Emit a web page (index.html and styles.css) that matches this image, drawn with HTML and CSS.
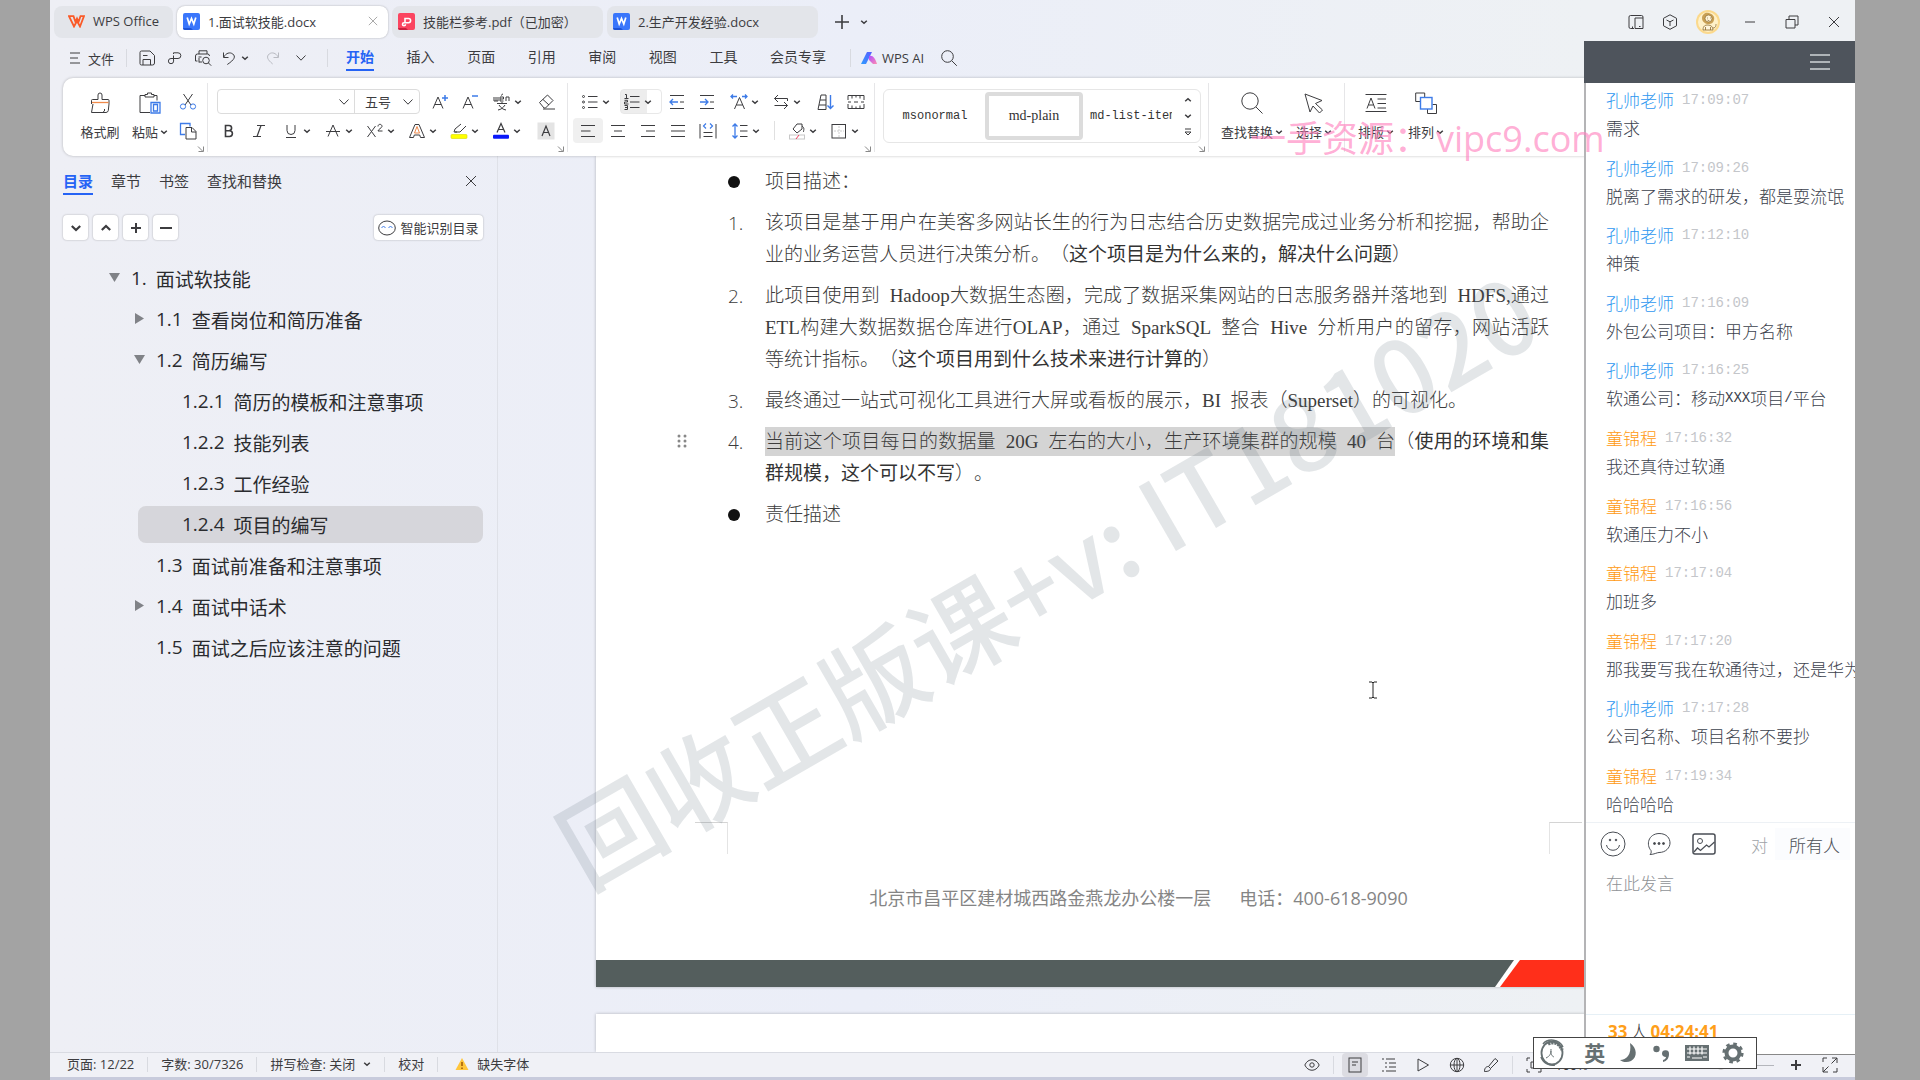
FILE: index.html
```html
<!DOCTYPE html>
<html lang="zh-CN">
<head>
  <meta charset="UTF-8">
  <meta name="viewport" content="width=device-width, initial-scale=1.0">
  <title>1.面试软技能.docx - WPS Office</title>
  <link rel="stylesheet" href="styles.css">
</head>
<body>
  <!-- Icon sprite -->
  <svg class="sprite" aria-hidden="true">
    <symbol id="chev" viewBox="0 0 8 8"><path d="M1.2 2.7 4 5.3 6.800 2.700" stroke-width="1.500"/></symbol>
    <symbol id="chev-up" viewBox="0 0 8 8"><path d="M1.200 5.300 4 2.700 6.800 5.300" stroke-width="1.500"/></symbol>
    <symbol id="chev-wide" viewBox="0 0 12 12"><path d="M1.500 3.500 6 8.200 10.500 3.500"/></symbol>
    <symbol id="launch" viewBox="0 0 8 8"><path d="M1 1.500 5.500 6M6.500 1.500V6.500H1.500"/></symbol>
    <symbol id="doc-w" viewBox="0 0 17 17"><rect width="17" height="17" rx="2" fill="#3a76fb" stroke="none"/><path d="M0 15h8l2 2H2a2 2 0 0 1-2-2z" fill="#1d52d6" stroke="none"/><path d="M4.200 4.500 6.200 11 8.500 5.500 10.800 11 12.800 4.500" stroke="#fff" stroke-width="1.700"/></symbol>
    <symbol id="doc-p" viewBox="0 0 17 17"><rect width="17" height="17" rx="2" fill="#fb4560" stroke="none"/><path d="M0 15h8l2 2H2a2 2 0 0 1-2-2z" fill="#c9213e" stroke="none"/><path d="M7 9.500V5.500h3.500a2 2 0 0 1 0 4.200H6a1.500 1.500 0 1 0 1.500 1.500" stroke="#fff" stroke-width="1.600"/></symbol>
    <symbol id="close" viewBox="0 0 12 12"><path d="M1 1 11 11M11 1 1 11"/></symbol>
    <symbol id="save" viewBox="0 0 18 18"><path d="M2 3.500A1.500 1.500 0 0 1 3.500 2H12l4.500 4.500V14a2 2 0 0 1-2 2h-11A1.500 1.500 0 0 1 2 14.500zM5 16v-5.500h7.500V16M5 6.500h4.500"/></symbol>
    <symbol id="share" viewBox="0 0 18 18"><path d="M7.500 11V6.500M7.500 3.800H12a2.800 2.800 0 0 1 0 5.700H7.500M7.500 3.800V5M9 9.500H5a2.600 2.600 0 1 0 2.600 2.600V11"/></symbol>
    <symbol id="preview" viewBox="0 0 18 18"><path d="M5 5V1.800h8V5M8 13H5M5 9v4.500M3.500 12H1.500V7a2 2 0 0 1 2-2h10a2 2 0 0 1 2 2M4.500 8h3"/><circle cx="12" cy="11.500" r="3.300"/><path d="m14.500 14 2.700 2.700"/></symbol>
    <symbol id="undo" viewBox="0 0 18 18"><path d="M3.500 3.500v5h5M3.800 8C6 4 10 2.800 12.800 5c3 2.500 2 5.500-5.500 10.500"/></symbol>
    <symbol id="redo" viewBox="0 0 18 18"><path d="M14.500 3.500v5h-5M14.200 8C12 4 8 2.800 5.200 5c-3 2.500-2 5.500 3.500 10"/></symbol>
    <symbol id="search" viewBox="0 0 18 18"><circle cx="7.500" cy="7.500" r="5.800"/><path d="m11.800 11.800 5 5"/></symbol>
    <symbol id="brush" viewBox="0 0 22 22"><path d="M2.500 12V8.500a1 1 0 0 1 1-1H9V3a2 2 0 0 1 4 0v4.500h6a1 1 0 0 1 1 1V12"/><path d="M3 10.500h16.500" stroke="#f08a4b" stroke-width="1.300"/><path d="M4 12 2.500 20.500H17a2.500 2.500 0 0 0 2.300-2L20 12M15.500 17v2l-2 1.500"/></symbol>
    <symbol id="paste" viewBox="0 0 22 22"><path d="M6 3.500H1v17h10M15 3.500h3v5M6 5V2.500h2.500V1h4v1.500H15V5z"/><path d="M12 10.500h9v10.500h-9zM14.500 12.500h4v6.500h-4z" stroke="#3d7be8" stroke-width="1.300"/></symbol>
    <symbol id="cut" viewBox="0 0 18 18"><path d="m4.500 1 7.500 11M13.500 1 6 12"/><circle cx="4" cy="13.500" r="2.600" stroke="#3d7be8"/><circle cx="14" cy="13.500" r="2.600" stroke="#3d7be8"/></symbol>
    <symbol id="copy" viewBox="0 0 18 18"><path d="M6 12.500H1.500v-11H11v3" stroke="#3d7be8" stroke-width="1.300"/><path d="M7 5.500h6l4 4v7.500H7zM12.500 5.500V10H17"/></symbol>
    <symbol id="a-plus" viewBox="0 0 18 18"><path d="M2 15.500 7 4l5 11.500M3.800 11.500h6.400"/><path d="M14 2v6M11 5h6" stroke="#3d7be8" stroke-width="1.500"/></symbol>
    <symbol id="a-minus" viewBox="0 0 18 18"><path d="M2 15.500 7 4l5 11.500M3.800 11.500h6.400"/><path d="M11 3h6" stroke="#3d7be8" stroke-width="1.500"/></symbol>
    <symbol id="pinyin" viewBox="0 0 18 18"><path d="M1 4v4h4V4M3 4v4M7 6h3.500V4H7v4h3.500M13 8V4h3v4M8 2.500 10 .8M4 10.500h10M9 9v1.500M6 12c2 3 4 4.500 7 5M12 12c-2 3-4 4.500-7 5"/></symbol>
    <symbol id="eraser" viewBox="0 0 18 18"><path d="m1.500 9.500 8-7.500 5.500 5.500-7.500 7.500H6zM5 6.500l6 5.500M5 16h12"/></symbol>
    <symbol id="bold" viewBox="0 0 18 18"><path d="M5.500 3.500H9a2.500 2.500 0 0 1 0 5.200H5.500zM5.500 8.700h4a2.900 2.900 0 0 1 0 5.800h-4z" stroke-width="1.600"/></symbol>
    <symbol id="italic" viewBox="0 0 18 18"><path d="M7 3.500h8M3 14.500h8M11 3.500 7 14.500" stroke-width="1.200"/></symbol>
    <symbol id="underline" viewBox="0 0 18 18"><path d="M5 3v5.500a4 4 0 0 0 8 0V3M4 15.500h10"/></symbol>
    <symbol id="strike" viewBox="0 0 18 18"><path d="M2 9.500h14M4 14.500 9 3l5 11.500" /></symbol>
    <symbol id="super" viewBox="0 0 18 18"><path d="m1.500 4 8 11M9.500 4l-8 11M12 4.500c0-3 4-2.800 4 0 0 1.200-4 3-4 4.500h4.500"/></symbol>
    <symbol id="a-effect" viewBox="0 0 18 18"><path d="M1.500 15.500 7 2.500h4l5.500 13h-4L11.700 13H6.300l-.8 2.500z"/><path d="m6.500 11 2.500-6.500L11.500 11z" stroke="#f08a4b"/></symbol>
    <symbol id="marker" viewBox="0 0 18 18"><path d="m4 10 1-3 6-5M5 10h5l6-6M4 10h3"/><rect x="1" y="12.500" width="16" height="4" rx="1" fill="#ffff00" stroke="#d8d800" stroke-width=".6"/></symbol>
    <symbol id="a-color" viewBox="0 0 18 18"><path d="M5 10.500 9 1.500l4 9M6.500 7.500h5" stroke-width="1.200"/><rect x="1" y="12.800" width="16" height="4" rx="1" fill="#0a19fa" stroke="none"/></symbol>
    <symbol id="a-shade" viewBox="0 0 18 18"><rect x=".5" y=".5" width="17" height="17" fill="#e4e4e4" stroke="none"/><path d="M5 14 9 4l4 10M6.300 10.500h5.400" stroke-width="1.200"/></symbol>
    <symbol id="bullets" viewBox="0 0 18 18"><path d="M7 3.500h9.500M7 9h9.500M7 14.500h9.500"/><circle cx="2.500" cy="3.500" r="1"/><circle cx="2.500" cy="9" r="1"/><circle cx="2.500" cy="14.500" r="1"/></symbol>
    <symbol id="numbers" viewBox="0 0 18 18"><path d="M7 3.500h9.500M7 9h9.500M7 14.500h9.500"/><path d="M2 1.500h1.500V5M1.500 5.500h4M1.500 7.300h3v1.700h-3v2h4M1.500 12.500h3v4h-3M2 14.500h2.500"/></symbol>
    <symbol id="outdent" viewBox="0 0 18 18"><path d="M2 2.500h14M2 15.500h14M12 9h4"/><path d="M10 9H2M5 6 2 9l3 3" stroke="#3d7be8" stroke-width="1.300"/></symbol>
    <symbol id="indent" viewBox="0 0 18 18"><path d="M2 2.500h14M2 15.500h14M12 9h4"/><path d="M2 9h8M7 6l3 3-3 3" stroke="#3d7be8" stroke-width="1.300"/></symbol>
    <symbol id="a-space" viewBox="0 0 18 18"><path d="m4.500 16 5-11.500 5 11.500M6.300 12h6.400"/><path d="M1 3.500h6M3 1.500l-2 2 2 2M17 3.500h-5M15 1.500l2 2-2 2" stroke="#3d7be8" stroke-width="1.300"/></symbol>
    <symbol id="wrap" viewBox="0 0 18 18"><path d="M2.500 5.500h13M6 2 2.500 5.500 6 9M15.500 5.500V8M2.500 12.500h13M12 9l3.500 3.500L12 16"/></symbol>
    <symbol id="sort" viewBox="0 0 18 18"><path d="M1 16.500 4 2h5v14.500M3 7h6M2 12h7M1 16.500h8"/><path d="M13.500 2v13M10.500 12.500l3 3 3-3" stroke="#3d7be8" stroke-width="1.400"/></symbol>
    <symbol id="ruler" viewBox="0 0 18 18"><path d="M1 7V2.500h16V7M1 11v4.500h16V11M5 2.500v3M9 2.500v2M13 2.500v3M5 15.500v-3M9 15.500v-2M13 15.500v-3M1 9h3M14 9h3M7 9h4"/></symbol>
    <symbol id="al-left" viewBox="0 0 18 18"><path d="M2 3.500h14M2 9h9.500M2 14.500h14" stroke-width="1.200"/></symbol>
    <symbol id="al-center" viewBox="0 0 18 18"><path d="M2 3.500h14M5 9h8M2 14.500h14" stroke-width="1.200"/></symbol>
    <symbol id="al-right" viewBox="0 0 18 18"><path d="M2 3.500h14M7 9h9M2 14.500h14" stroke-width="1.200"/></symbol>
    <symbol id="al-full" viewBox="0 0 18 18"><path d="M2 3.500h14M2 9h14M2 14.500h14" stroke-width="1.200"/></symbol>
    <symbol id="al-dist" viewBox="0 0 18 18"><path d="M1 2v14.500M17 2v14.500M4.500 10.500h9M4.500 14.500h9"/><path d="M7 1.500 4.500 4 7 6.500M11 1.500 13.500 4 11 6.500" stroke="#3d7be8" stroke-width="1.200"/></symbol>
    <symbol id="spacing" viewBox="0 0 18 18"><path d="M9 3.500h7.500M9 9h7.500M9 14.500h7.500"/><path d="M4 2v14M1.500 4.500 4 2l2.500 2.500M1.500 13.500 4 16l2.500-2.500" stroke="#3d7be8" stroke-width="1.300"/></symbol>
    <symbol id="fill" viewBox="0 0 18 18"><path d="M5 7 9 2h5v5l-5 4zM14 4c3 2 1.500 4 1.500 6"/><rect x="1.500" y="13" width="15" height="4" stroke="#c8c8c8"/><path d="m8 17 3-4" stroke="#f04060"/></symbol>
    <symbol id="borders" viewBox="0 0 18 18"><rect x="2" y="2.500" width="13.500" height="13.500"/><path d="M9 4v11M4 9h10" stroke="#ccc" stroke-dasharray="2 1"/></symbol>
    <symbol id="find" viewBox="0 0 22 22"><circle cx="9" cy="9" r="8.200"/><path d="m15 15 6.500 6.500"/></symbol>
    <symbol id="cursor" viewBox="0 0 22 22"><path d="m2 2 17 6.500-6.500 3 7 6.500-3 3-6.500-7L7 20z"/></symbol>
    <symbol id="typeset" viewBox="0 0 22 22"><path d="M.5 2.500h21M.5 19.500h21M2 16.500 6 6l4 10.500M3.500 13h5M12.500 7h8.500M12.500 11.500h8.500M12.500 16h8.500"/></symbol>
    <symbol id="arrange" viewBox="0 0 22 22"><path d="M5 9.500H.7V1h9v4M17.500 12.500h4v9h-9V17"/><rect x="5.500" y="5.500" width="11.500" height="11.500" stroke="#3d7be8" stroke-width="1.400"/></symbol>
    <symbol id="plus" viewBox="0 0 16 16"><path d="M8 1v14M1 8h14" stroke-width="1.600"/></symbol>
    <symbol id="plus-bold" viewBox="0 0 12 12"><path d="M6 1v10M1 6h10" stroke-width="2"/></symbol>
    <symbol id="minus-bold" viewBox="0 0 12 12"><path d="M0 6h12" stroke-width="2"/></symbol>
    <symbol id="burger" viewBox="0 0 20 20"><path d="M0 3h20M0 10h20M0 17h20" stroke-width="1.500"/></symbol>
  </svg>

  <div class="app">
    <header class="titlebar">
      <button class="tab home-tab">
        <svg width="17" height="13" viewBox="0 0 17 13"><path d="M1 1.200h4.500L7.500 7 9 3.500 10.500 7l2-5.800H16L12 11.500 9 6 6 11.500z" fill="none" stroke="#fa5a28" stroke-width="1.800"/></svg>
        WPS Office
      </button>
      <button class="tab active"><svg class="ico17"><use href="#doc-w"/></svg>1.面试软技能.docx<svg class="ico10 tab-close"><use href="#close"/></svg></button>
      <button class="tab"><svg class="ico17"><use href="#doc-p"/></svg>技能栏参考.pdf（已加密）</button>
      <button class="tab"><svg class="ico17"><use href="#doc-w"/></svg>2.生产开发经验.docx</button>
      <button class="new-tab" aria-label="新建"><svg class="ico16"><use href="#plus"/></svg><svg class="ico8"><use href="#chev"/></svg></button>
      <div class="window-controls">
        <button aria-label="分屏"><svg class="ico16" viewBox="0 0 16 16"><path d="M6 14.500H2.500a1.500 1.500 0 0 1-1.500-1.500V3a1.500 1.500 0 0 1 1.500-1.500h11A1.500 1.500 0 0 1 15 3v11.500H7V4h8M4.500 14.500v-2M11 12.500h1.500"/></svg></button>
        <button aria-label="应用"><svg class="ico16" viewBox="0 0 16 16"><path d="m8 .8 6.500 3.500v7.500L8 15.300 1.500 11.800V4.300zM4.500 6 8 7.800 11.500 6M8 7.800V12"/></svg></button>
        <button class="wide" aria-label="账户">
          <svg class="ico24" viewBox="0 0 24 24"><circle cx="12" cy="12" r="12" fill="#fbd98c" stroke="none"/><circle cx="12" cy="12" r="10" fill="#fff1c9" stroke="none"/><path d="M6 8c0-4 4-6 7-5s6 3 5 7-4 4-6 4-6-2-6-6z" fill="#c9a055" stroke="none"/><circle cx="12.500" cy="8.500" r="3.500" fill="#fff5dc" stroke="#8d6b2c" stroke-width=".7"/><path d="M11 8h.8M14 8h.8M11.500 10c.8.8 1.500.8 2 0" stroke="#6b4d1a" stroke-width=".7"/><path d="M7 20c0-4 2-5 5-5s5 2 5 5zM9.500 17v3M14.500 17v3M17 18c3 0 3-3 3-4" fill="#fff5dc" stroke="#8d6b2c" stroke-width=".8"/></svg>
        </button>
        <button class="wide" aria-label="最小化"><svg class="ico12" viewBox="0 0 12 12"><path d="M1 6h10"/></svg></button>
        <button class="wide" aria-label="还原"><svg class="ico14" viewBox="0 0 14 14"><path d="M1 4.500h9V13H1zM4 4.500V1h9v9h-3"/></svg></button>
        <button class="wide" aria-label="关闭"><svg class="ico12"><use href="#close"/></svg></button>
      </div>
    </header>

    <div class="menubar">
      <button class="file-btn"><svg class="ico12" viewBox="0 0 10 12"><path d="M0 1h10M0 6h8M0 11h10"/></svg>文件</button>
      <span class="sep"></span>
      <button class="quick" aria-label="保存"><svg class="ico18"><use href="#save"/></svg></button>
      <button class="quick" aria-label="输出为PDF"><svg class="ico18"><use href="#share"/></svg></button>
      <button class="quick" aria-label="打印预览"><svg class="ico18"><use href="#preview"/></svg></button>
      <button class="drop" aria-label="撤销"><svg class="ico18"><use href="#undo"/></svg><svg class="ico8"><use href="#chev"/></svg></button>
      <button class="quick faded" aria-label="恢复"><svg class="ico18"><use href="#redo"/></svg></button>
      <button class="quick" aria-label="更多"><svg class="ico12"><use href="#chev-wide"/></svg></button>
      <span class="sep"></span>
      <nav class="menu">
        <button class="active">开始</button>
        <button>插入</button>
        <button>页面</button>
        <button>引用</button>
        <button>审阅</button>
        <button>视图</button>
        <button>工具</button>
        <button>会员专享</button>
      </nav>
      <span class="sep"></span>
      <button class="ai-btn">
        <svg width="16" height="14" viewBox="0 0 16 14">
          <defs>
            <linearGradient id="aiBlue" x1="1" y1="0" x2="0" y2="1"><stop offset="0" stop-color="#5a5dff"/><stop offset="1" stop-color="#2f9bff"/></linearGradient>
            <linearGradient id="aiPink" x1="0" y1="0" x2="1" y2="1"><stop offset="0" stop-color="#b04dff"/><stop offset="1" stop-color="#ff8fb0"/></linearGradient>
          </defs>
          <path d="M6 1h5L5 13H0z" fill="url(#aiBlue)" stroke="none"/><path d="M8 5c4-1 6 2 8 8h-4L8 9z" fill="url(#aiPink)" stroke="none"/>
        </svg>
        WPS AI
      </button>
      <button class="quick" aria-label="搜索"><svg class="ico18"><use href="#search"/></svg></button>
    </div>

    <section class="ribbon">
      <div class="group g-clip">
        <button class="big"><span class="big-icon"><svg class="ico22"><use href="#brush"/></svg></span><span class="big-label">格式刷</span></button>
        <button class="big"><span class="big-icon"><svg class="ico22"><use href="#paste"/></svg></span><span class="big-label">粘贴<svg class="ico8"><use href="#chev"/></svg></span></button>
        <div class="stack">
          <button class="small" aria-label="剪切"><svg class="ico18"><use href="#cut"/></svg></button>
          <button class="small" aria-label="复制"><svg class="ico18"><use href="#copy"/></svg></button>
        </div>
        <svg class="launcher"><use href="#launch"/></svg>
      </div>

      <div class="group g-font">
        <div class="rows">
          <div class="row">
            <div class="combo">
              <button class="combo-name" aria-label="字体"><svg class="ico12"><use href="#chev-wide"/></svg></button>
              <button class="combo-size">五号<svg class="ico12"><use href="#chev-wide"/></svg></button>
            </div>
            <div class="pair">
              <button class="tool" aria-label="增大字号"><svg class="ico18"><use href="#a-plus"/></svg></button>
              <button class="tool" aria-label="减小字号"><svg class="ico18"><use href="#a-minus"/></svg></button>
            </div>
            <button class="drop" aria-label="拼音指南"><svg class="ico18"><use href="#pinyin"/></svg><svg class="ico8"><use href="#chev"/></svg></button>
            <button class="tool" aria-label="清除格式"><svg class="ico18"><use href="#eraser"/></svg></button>
          </div>
          <div class="row">
            <div class="pair">
              <button class="tool" aria-label="加粗"><svg class="ico18"><use href="#bold"/></svg></button>
              <button class="tool" aria-label="倾斜"><svg class="ico18"><use href="#italic"/></svg></button>
            </div>
            <button class="drop" aria-label="下划线"><svg class="ico18"><use href="#underline"/></svg><svg class="ico8"><use href="#chev"/></svg></button>
            <button class="drop" aria-label="删除线"><svg class="ico18"><use href="#strike"/></svg><svg class="ico8"><use href="#chev"/></svg></button>
            <button class="drop" aria-label="上标"><svg class="ico18"><use href="#super"/></svg><svg class="ico8"><use href="#chev"/></svg></button>
            <button class="drop" aria-label="文字效果"><svg class="ico18"><use href="#a-effect"/></svg><svg class="ico8"><use href="#chev"/></svg></button>
            <button class="drop" aria-label="突出显示"><svg class="ico18"><use href="#marker"/></svg><svg class="ico8"><use href="#chev"/></svg></button>
            <button class="drop" aria-label="字体颜色"><svg class="ico18"><use href="#a-color"/></svg><svg class="ico8"><use href="#chev"/></svg></button>
            <button class="tool" aria-label="字符底纹"><svg class="ico18"><use href="#a-shade"/></svg></button>
          </div>
        </div>
        <svg class="launcher"><use href="#launch"/></svg>
      </div>

      <div class="group g-para">
        <div class="rows">
          <div class="row inset">
            <button class="drop" aria-label="项目符号"><svg class="ico18"><use href="#bullets"/></svg><svg class="ico8"><use href="#chev"/></svg></button>
            <button class="drop pressed" aria-label="编号"><svg class="ico18"><use href="#numbers"/></svg><svg class="ico8"><use href="#chev"/></svg></button>
            <div class="pair">
              <button class="tool" aria-label="减少缩进"><svg class="ico18"><use href="#outdent"/></svg></button>
              <button class="tool" aria-label="增加缩进"><svg class="ico18"><use href="#indent"/></svg></button>
            </div>
            <button class="drop" aria-label="中文版式"><svg class="ico18"><use href="#a-space"/></svg><svg class="ico8"><use href="#chev"/></svg></button>
            <button class="drop" aria-label="显示标记"><svg class="ico18"><use href="#wrap"/></svg><svg class="ico8"><use href="#chev"/></svg></button>
            <button class="tool" aria-label="排序"><svg class="ico18"><use href="#sort"/></svg></button>
            <button class="tool" aria-label="制表位"><svg class="ico18"><use href="#ruler"/></svg></button>
          </div>
          <div class="row">
            <button class="tool on" aria-label="左对齐"><svg class="ico18"><use href="#al-left"/></svg></button>
            <button class="tool" aria-label="居中"><svg class="ico18"><use href="#al-center"/></svg></button>
            <button class="tool" aria-label="右对齐"><svg class="ico18"><use href="#al-right"/></svg></button>
            <div class="pair">
              <button class="tool" aria-label="两端对齐"><svg class="ico18"><use href="#al-full"/></svg></button>
              <button class="tool" aria-label="分散对齐"><svg class="ico18"><use href="#al-dist"/></svg></button>
            </div>
            <button class="drop" aria-label="行距"><svg class="ico18"><use href="#spacing"/></svg><svg class="ico8"><use href="#chev"/></svg></button>
            <span class="row-sep"></span>
            <button class="drop" aria-label="底纹颜色"><svg class="ico18"><use href="#fill"/></svg><svg class="ico8"><use href="#chev"/></svg></button>
            <button class="drop" aria-label="边框"><svg class="ico18"><use href="#borders"/></svg><svg class="ico8"><use href="#chev"/></svg></button>
          </div>
        </div>
        <svg class="launcher"><use href="#launch"/></svg>
      </div>

      <div class="group g-style">
        <div class="gallery">
          <button class="style-item mono">msonormal</button>
          <button class="style-item serif selected">md-plain</button>
          <button class="style-item mono clipped">md-list-item</button>
          <div class="gallery-nav">
            <svg class="ico8"><use href="#chev-up"/></svg>
            <svg class="ico8"><use href="#chev"/></svg>
            <svg class="ico8" viewBox="0 0 8 8"><path d="M1 1h6M1 4l3 3 3-3z"/></svg>
          </div>
        </div>
        <svg class="launcher"><use href="#launch"/></svg>
      </div>

      <div class="group g-find">
        <button class="big long"><span class="big-icon"><svg class="ico22"><use href="#find"/></svg></span><span class="big-label">查找替换<svg class="ico8"><use href="#chev"/></svg></span></button>
        <button class="big"><span class="big-icon"><svg class="ico22"><use href="#cursor"/></svg></span><span class="big-label">选择<svg class="ico8"><use href="#chev"/></svg></span></button>
      </div>

      <div class="group g-layout">
        <button class="big"><span class="big-icon"><svg class="ico22"><use href="#typeset"/></svg></span><span class="big-label">排版<svg class="ico8"><use href="#chev"/></svg></span></button>
        <button class="big"><span class="big-icon"><svg class="ico22"><use href="#arrange"/></svg></span><span class="big-label">排列<svg class="ico8"><use href="#chev"/></svg></span></button>
      </div>
    </section>

    <main class="workspace">
      <aside class="sidebar">
        <div class="side-tabs">
          <button class="active">目录</button>
          <button>章节</button>
          <button>书签</button>
          <button>查找和替换</button>
          <button class="side-close" aria-label="关闭"><svg class="ico12"><use href="#close"/></svg></button>
        </div>
        <div class="side-tools">
          <button class="square" aria-label="展开"><svg class="ico12"><use href="#chev"/></svg></button>
          <button class="square" aria-label="收起"><svg class="ico12"><use href="#chev-up"/></svg></button>
          <button class="square" aria-label="新增"><svg class="ico12"><use href="#plus-bold"/></svg></button>
          <button class="square" aria-label="减少"><svg class="ico12"><use href="#minus-bold"/></svg></button>
          <button class="smart">
            <svg width="18" height="16" viewBox="0 0 18 16"><ellipse cx="9" cy="8" rx="8.300" ry="7"/><path d="m3.500 8 2-2 2 2M10.500 8l2-2 2 2" stroke="#3d7be8"/></svg>
            智能识别目录
          </button>
        </div>
        <ul class="toc">
          <li class="lv1"><span class="arrow open"></span><a href="#"><span>1.</span>面试软技能</a></li>
          <li class="lv2"><span class="arrow shut"></span><a href="#"><span>1.1</span>查看岗位和简历准备</a></li>
          <li class="lv2"><span class="arrow open"></span><a href="#"><span>1.2</span>简历编写</a></li>
          <li class="lv3"><a href="#"><span>1.2.1</span>简历的模板和注意事项</a></li>
          <li class="lv3"><a href="#"><span>1.2.2</span>技能列表</a></li>
          <li class="lv3"><a href="#"><span>1.2.3</span>工作经验</a></li>
          <li class="lv3 current"><a href="#"><span>1.2.4</span>项目的编写</a></li>
          <li class="lv2"><span class="arrow"></span><a href="#"><span>1.3</span>面试前准备和注意事项</a></li>
          <li class="lv2"><span class="arrow shut"></span><a href="#"><span>1.4</span>面试中话术</a></li>
          <li class="lv2"><span class="arrow"></span><a href="#"><span>1.5</span>面试之后应该注意的问题</a></li>
        </ul>
      </aside>

      <div class="canvas">
        <article class="page">
          <ul class="doc">
            <li><i class="dot"></i><div>项目描述：</div></li>
            <li><i>1.</i><div>
              <span class="line full">该项目是基于用户在美客多网站长生的行为日志结合历史数据完成过业务分析和挖掘，帮助企</span>
              <span class="line">业的业务运营人员进行决策分析。（<b>这个项目是为什么来的，解决什么问题</b>）</span>
            </div></li>
            <li><i>2.</i><div>
              <span class="line full">此项目使用到&nbsp; Hadoop大数据生态圈，完成了数据采集网站的日志服务器并落地到&nbsp; HDFS,通过</span>
              <span class="line full">ETL构建大数据数据仓库进行OLAP，通过&nbsp; SparkSQL&nbsp; 整合&nbsp; Hive&nbsp; 分析用户的留存，网站活跃</span>
              <span class="line">等统计指标。（<b>这个项目用到什么技术来进行计算的</b>）</span>
            </div></li>
            <li><i>3.</i><div>最终通过一站式可视化工具进行大屏或看板的展示，BI&nbsp; 报表（Superset）的可视化。</div></li>
            <li class="hovered"><svg class="handle" viewBox="0 0 10 14"><circle cx="2" cy="2" r="1.500"/><circle cx="8" cy="2" r="1.500"/><circle cx="2" cy="7" r="1.500"/><circle cx="8" cy="7" r="1.500"/><circle cx="2" cy="12" r="1.500"/><circle cx="8" cy="12" r="1.500"/></svg><i>4.</i><div>
              <span class="line full"><mark>当前这个项目每日的数据量&nbsp; 20G&nbsp; 左右的大小，生产环境集群的规模&nbsp; 40&nbsp; 台</mark>（<b>使用的环境和集</b></span>
              <span class="line"><b>群规模，这个可以不写</b>）。</span>
            </div></li>
            <li><i class="dot"></i><div>责任描述</div></li>
          </ul>
          <footer class="page-foot">
            <div class="corners"><span class="corner left"></span><span class="corner right"></span></div>
            <p class="address"><span>北京市昌平区建材城西路金燕龙办公楼一层</span><span>电话：400-618-9090</span></p>
            <div class="band"><span class="band-dark"></span><span class="band-red"></span></div>
          </footer>
        </article>
        <article class="page next"></article>
      </div>
    </main>

    <footer class="statusbar">
      <div class="status-left">
        <span>页面: 12/22</span>
        <span>字数: 30/7326</span>
        <span>拼写检查: 关闭<svg class="ico8"><use href="#chev"/></svg></span>
        <span>校对</span>
        <span class="warn"><svg class="ico14" viewBox="0 0 14 14"><path d="M7 1 13.500 13H.5z" fill="#ffc63c" stroke="none"/><path d="M7 5v4M7 10.500V12" stroke="#a05a00" stroke-width="1.500"/></svg>缺失字体</span>
      </div>
      <div class="status-right">
        <button aria-label="护眼"><svg class="ico16" viewBox="0 0 16 16"><path d="M.8 8C4 1 12 1 15.200 8 12 15 4 15 .8 8z"/><circle cx="8" cy="8" r="2.200"/></svg></button>
        <span class="sep"></span>
        <button class="on" aria-label="页面视图"><svg class="ico16" viewBox="0 0 16 16"><rect x="2" y="1" width="12" height="14"/><path d="M5 5h6M5 8h4"/></svg></button>
        <button aria-label="大纲"><svg class="ico16" viewBox="0 0 16 16"><path d="M1 2h2M5 2h9M4 6h2M8 6h7M4 10h2M8 10h7M1 14h2M5 14h10"/></svg></button>
        <button aria-label="阅读"><svg class="ico14" viewBox="0 0 14 14"><path d="m2 1 10.500 6L2 13z"/></svg></button>
        <button aria-label="Web版式"><svg class="ico16" viewBox="0 0 16 16"><circle cx="8" cy="8" r="6.700"/><ellipse cx="8" cy="8" rx="3" ry="6.700"/><path d="M1.300 8h13.400M8 1.300v13.400"/></svg></button>
        <button aria-label="写作模式"><svg class="ico16" viewBox="0 0 16 16"><path d="M1.500 14.500c0-4 2-5 4-5l2 2c0 2-2 3-6 3zM5.500 9.500 12 1.500l3 2.500-7.500 7.500"/></svg></button>
        <span class="sep"></span>
        <button aria-label="适应"><svg class="ico16" viewBox="0 0 16 16"><path d="M1 4V1h3M12 1h3v3M1 12v3h3M12 15h3v-3M5 5h6v6H5z"/></svg></button>
        <span class="zoom-value">100%</span>
        <input class="zoom" type="range" min="0" max="200" value="132" aria-label="缩放">
        <button aria-label="放大"><svg class="ico12"><use href="#plus-bold"/></svg></button>
        <button class="expand" aria-label="全屏"><svg class="ico16" viewBox="0 0 16 16"><path d="M1 5V1h4M10 1h5v5M15 1 9.500 6.500M15 11v4h-4M6 15H1v-5M1 15l5.500-5.500"/></svg></button>
      </div>
    </footer>

    <section class="chat">
      <div class="chat-head"><button aria-label="菜单"><svg class="ico20"><use href="#burger"/></svg></button></div>
      <div class="chat-log">
        <div class="msg"><p><span class="teacher">孔帅老师</span><time>17:09:07</time></p><p>需求</p></div>
        <div class="msg"><p><span class="teacher">孔帅老师</span><time>17:09:26</time></p><p>脱离了需求的研发，都是耍流氓</p></div>
        <div class="msg"><p><span class="teacher">孔帅老师</span><time>17:12:10</time></p><p>神策</p></div>
        <div class="msg"><p><span class="teacher">孔帅老师</span><time>17:16:09</time></p><p>外包公司项目：甲方名称</p></div>
        <div class="msg"><p><span class="teacher">孔帅老师</span><time>17:16:25</time></p><p>软通公司：移动<code>XXX</code>项目<code>/</code>平台</p></div>
        <div class="msg"><p><span class="student">童锦程</span><time>17:16:32</time></p><p>我还真待过软通</p></div>
        <div class="msg"><p><span class="student">童锦程</span><time>17:16:56</time></p><p>软通压力不小</p></div>
        <div class="msg"><p><span class="student">童锦程</span><time>17:17:04</time></p><p>加班多</p></div>
        <div class="msg"><p><span class="student">童锦程</span><time>17:17:20</time></p><p>那我要写我在软通待过，还是华为</p></div>
        <div class="msg"><p><span class="teacher">孔帅老师</span><time>17:17:28</time></p><p>公司名称、项目名称不要抄</p></div>
        <div class="msg"><p><span class="student">童锦程</span><time>17:19:34</time></p><p>哈哈哈哈</p></div>
      </div>
      <div class="chat-tools">
        <button aria-label="表情"><svg class="ico26" viewBox="0 0 26 26"><circle cx="13" cy="13" r="12"/><circle cx="10" cy="9" r=".8" fill="#444"/><circle cx="16" cy="9" r=".8" fill="#444"/><path d="M6.500 14c1 7 12 7 13 0"/></svg></button>
        <button aria-label="消息"><svg class="ico24" viewBox="0 0 24 24"><path d="M3 22.500c1-1 1.500-2 1-4C-1 13 1 2 12 1.500c8 0 11 5 11 9.500s-4 9.500-11 9.500c-2 0-5 2-9 2z"/><circle cx="7.500" cy="11.500" r="1" fill="#444"/><circle cx="12" cy="11.500" r="1" fill="#444"/><circle cx="16.500" cy="11.500" r="1" fill="#444"/></svg></button>
        <button aria-label="图片"><svg class="ico24" viewBox="0 0 24 24"><rect x="1" y="2" width="22" height="20" rx="2" stroke-width="1.500"/><circle cx="8" cy="9" r="2.500"/><path d="m2 20 3.500-4 3 2.500 6-5.500 2.500 2 5.500-5" stroke-width="1.300"/></svg></button>
        <label for="target">对</label>
        <select id="target"><option>所有人</option></select>
      </div>
      <textarea class="chat-input" aria-label="发言" placeholder="在此发言"></textarea>
      <div class="chat-foot"><strong>33</strong><span>人</span><strong>04:24:41</strong></div>
    </section>

    <div class="ime">
      <svg class="ime-logo" viewBox="0 0 28 28"><ellipse cx="13" cy="14" rx="10.500" ry="11.500" stroke-width="1.800"/><path d="M4 5C9-1 20 0 24 8M2 18c2 6 8 9 14 8" stroke-width="1.500"/><path d="M12 10c0 5-1 7-5 9M12 12c0 4 1 5 3 6" stroke-width="1"/><path d="M9 5c5-3 12-1 14 6" stroke-width="3.500" stroke-dasharray="2.500 .8"/></svg>
      <b>英</b>
      <svg class="ico20 solid" viewBox="0 0 20 20"><path d="M12 0c7 5 8 14 1 18-4 2-9 1-11-1 6 0 12-5 10-17z"/></svg>
      <svg class="ico20 solid" viewBox="0 0 20 20"><circle cx="4.500" cy="6" r="3.200"/><path d="M10 10.500a3.500 3.500 0 1 1 7 .5c0 4-2 7-6 8v-2c2-.5 3-2 3-3-2.500 0-4-1.500-4-3.500z"/></svg>
      <svg class="ico24 solid" viewBox="0 0 24 24"><path d="M0 4h24v16H0z"/><path d="M2 8h20M2 12h20M2 16h3M18 16h4M7 17h10M5 5.500v8M9 5.500v8M13 5.500v8M17 5.500v8" stroke="#fff" stroke-width="1.200"/></svg>
      <svg class="ico22 gear" viewBox="0 0 22 22"><circle cx="11" cy="11" r="6.500" stroke-width="4"/><circle cx="11" cy="11" r="9.300" stroke-width="2.600" stroke-dasharray="3.600 3.700"/></svg>
    </div>

    <div class="doc-watermark">回收正版课+v: IT181020</div>
    <div class="pink-watermark"><span>一手资源：</span><span>vipc9.com</span></div>
    <svg class="text-cursor" viewBox="0 0 10 18"><path d="M1 1h3l1 1 1-1h3M5 2v14M1 17h3l1-1 1 1h3"/></svg>
  </div>
</body>
</html>
```
FILE: styles.css
```css
* {
  margin: 0;
  padding: 0;
  box-sizing: border-box;
}

body {
  background: #a3a3a3;
  color: #3c3c3f;
  font-family: "Open Sans", "Noto Sans CJK SC", sans-serif;
  font-size: 13px;
  overflow: hidden;
}

button,
select,
textarea {
  font: inherit;
  color: inherit;
  background: none;
  border: none;
  white-space: nowrap;
}

svg {
  fill: none;
  stroke: currentColor;
  flex: none;
}

a {
  color: inherit;
  text-decoration: none;
}

ul {
  list-style: none;
}

.sprite {
  display: none;
}

.ico8 { width: 8px; height: 8px; }
.ico10 { width: 10px; height: 10px; }
.ico12 { width: 12px; height: 12px; }
.ico14 { width: 14px; height: 14px; }
.ico16 { width: 16px; height: 16px; }
.ico17 { width: 17px; height: 17px; }
.ico18 { width: 18px; height: 18px; }
.ico20 { width: 20px; height: 20px; }
.ico22 { width: 22px; height: 22px; }
.ico24 { width: 24px; height: 24px; }
.ico26 { width: 26px; height: 26px; }

.app {
  position: relative;
  display: flex;
  flex-direction: column;
  height: 100vh;
  margin: 0 65px 0 50px;
  background: linear-gradient(90deg, #eeeff5 0%, #ebeef8 45%, #eef1f4 85%);
  overflow: hidden;
}

/* Title bar */
.titlebar {
  display: flex;
  gap: 4px;
  height: 43px;
  padding: 6px 0 5px 4px;
}

.tab {
  display: flex;
  align-items: center;
  gap: 8px;
  width: 211px;
  padding: 0 6px 2px;
  border-radius: 8px;
  background: #e3e5ea;
}

.tab.active {
  background: #fff;
  box-shadow: 0 0 2px rgba(0, 0, 0, 0.3);
}

.home-tab {
  width: 119px;
  padding: 0 14px 2px;
}

.tab-close {
  margin-left: auto;
  margin-right: 4px;
  color: #999;
}

.new-tab {
  display: flex;
  align-items: center;
  gap: 10px;
  padding: 0 12px;
}

.window-controls {
  display: flex;
  margin-left: auto;
}

.window-controls button {
  display: flex;
  align-items: center;
  justify-content: center;
  width: 34px;
}

.window-controls .wide {
  width: 42px;
}

/* Menu bar */
.menubar {
  display: flex;
  align-items: center;
  height: 30px;
  margin-bottom: 5px;
  padding-left: 19px;
}

.file-btn {
  display: flex;
  align-items: center;
  gap: 7px;
}

.sep {
  width: 1px;
  height: 18px;
  margin: 0 6px 0 12px;
  background: #d8dae0;
}

.quick {
  display: flex;
  align-items: center;
  justify-content: center;
  width: 28px;
}

.faded {
  color: #b9bbc2;
}

.menu {
  display: flex;
  justify-content: space-between;
  width: 480px;
  margin: 0 12px 0 12px;
  font-size: 14px;
}

.menu button,
.side-tabs button {
  line-height: 24px;
  border-bottom: 2px solid transparent;
}

.menu .active,
.side-tabs .active {
  color: #2563f5;
  font-weight: 700;
  border-bottom-color: #2563f5;
}

.ai-btn {
  display: flex;
  align-items: center;
  gap: 5px;
  margin: 0 11px 0 4px;
}

/* Ribbon */
.ribbon {
  display: flex;
  flex: none;
  height: 78px;
  margin-left: 13px;
  background: #fff;
  border-radius: 10px 0 0 10px;
  box-shadow: 0 0 3px rgba(0, 0, 0, 0.25);
  z-index: 1;
}

.group {
  position: relative;
  display: flex;
  padding: 9px 6px;
}

.group::after {
  content: "";
  position: absolute;
  top: 5px;
  bottom: 4px;
  right: 0;
  width: 1px;
  background: #e6e6e8;
}

.group:last-child::after {
  display: none;
}

.g-clip {
  padding: 9px 8px 9px 12px;
}

.g-para {
  padding: 9px 4px 9px 5px;
}

.g-style {
  padding: 11px 8px 13px;
}

.launcher {
  position: absolute;
  right: 3px;
  bottom: 3px;
  width: 8px;
  height: 8px;
  color: #888;
}

.row {
  display: flex;
  align-items: center;
  height: 29px;
}

.inset {
  padding-left: 5px;
}

.pair {
  display: flex;
  padding-right: 5px;
}

.tool,
.small {
  display: flex;
  align-items: center;
  justify-content: center;
  width: 30px;
  height: 25px;
}

.small {
  width: 25px;
  height: 29px;
}

.tool.on {
  background: #f0f0f0;
  border-radius: 4px;
}

.drop {
  display: flex;
  align-items: center;
  gap: 3px;
  width: 42px;
  height: 25px;
  padding-left: 3px;
}

.drop.pressed {
  border: 1px solid #e8e8e8;
  border-radius: 4px;
  background: linear-gradient(90deg, #ededed 26px, #fff 26px);
  padding-left: 2px;
}

.row-sep {
  width: 1px;
  height: 19px;
  margin: 0 10px 0 4px;
  background: #e0e0e0;
}

.combo {
  display: flex;
  width: 203px;
  height: 25px;
  margin: 0 5px 0 3px;
  border: 1px solid #dcdcdc;
  border-radius: 4px;
}

.combo button {
  display: flex;
  align-items: center;
  justify-content: flex-end;
  padding-right: 4px;
}

.combo-name {
  flex: 1;
  border-right: 1px solid #dcdcdc;
}

.combo .combo-size {
  width: 64px;
  justify-content: space-between;
  padding: 0 5px 0 10px;
}

.big {
  width: 50px;
}

.big.long {
  width: 74px;
}

.big-icon,
.big-label {
  display: flex;
  align-items: center;
  justify-content: center;
  gap: 2px;
  height: 29px;
}

.gallery {
  display: flex;
  width: 318px;
  padding: 2px;
  border: 1px solid #e6e6e6;
  border-radius: 6px;
}

.style-item {
  width: 98px;
  margin-right: 1px;
  border: 4px solid transparent;
  color: #333;
}

.style-item.selected {
  border-color: #dcdcdc;
  border-radius: 4px;
}

.style-item.clipped {
  width: 92px;
  padding-left: 2px;
  overflow: hidden;
  text-align: left;
}

.mono {
  font-family: "Liberation Mono", monospace;
  font-size: 12px;
}

.serif {
  font-family: "Liberation Serif", serif;
  font-size: 14px;
}

.gallery-nav {
  display: flex;
  flex-direction: column;
  align-items: center;
  justify-content: space-around;
  flex: 1;
}

/* Sidebar */
.workspace {
  display: flex;
  flex: 1;
  min-height: 0;
}

.sidebar {
  width: 448px;
  padding: 13px 14px 0 13px;
  border-right: 1px solid #dfe1e8;
}

.side-tabs {
  display: flex;
  gap: 18px;
  font-size: 15px;
}

.side-tabs .side-close {
  margin-left: auto;
  margin-right: 6px;
}

.side-tools {
  display: flex;
  gap: 5px;
  margin: 20px 0;
}

.square,
.smart {
  display: flex;
  align-items: center;
  justify-content: center;
  gap: 4px;
  width: 25px;
  height: 25px;
  background: #fff;
  border-radius: 4px;
  box-shadow: 0 0 2px rgba(0, 0, 0, 0.3);
}

.smart {
  width: 109px;
  margin-left: auto;
}

.toc {
  color: #2a2b2e;
  font-size: 19px;
}

.toc li {
  display: flex;
  align-items: center;
  height: 37px;
  margin-bottom: 4px;
  border-radius: 8px;
}

.toc a {
  display: flex;
  gap: 9px;
}

.lv1 {
  padding-left: 46px;
}

.lv2 {
  padding-left: 71px;
}

.toc .lv3 {
  margin-left: 75px;
  padding-left: 44px;
}

.toc .current {
  background: #d6d6db;
}

.arrow {
  width: 22px;
}

.arrow::before {
  content: "";
  display: block;
  width: 11px;
  height: 9px;
  margin-bottom: 2px;
}

.arrow.open::before {
  background: #808287;
  clip-path: polygon(0 0, 100% 0, 50% 100%);
}

.arrow.shut::before {
  background: #808287;
  width: 9px;
  height: 11px;
  margin-left: 1px;
  clip-path: polygon(0 0, 100% 50%, 0 100%);
}

/* Document */
.canvas {
  display: flex;
  flex-direction: column;
  flex: 1;
  gap: 27px;
  padding-left: 98px;
  overflow: hidden;
}

.page {
  display: flex;
  flex-direction: column;
  justify-content: space-between;
  flex: 1;
  width: 1085px;
  background: #fff;
  box-shadow: 0 0 3px rgba(0, 0, 0, 0.25);
}

.page.next {
  flex: none;
  height: 38px;
}

.doc {
  padding: 10px 132px 0;
  color: #3c3c3c;
  font-family: "Liberation Serif", "Noto Sans CJK SC", serif;
  font-size: 19px;
  font-weight: 300;
  line-height: 32px;
  text-spacing-trim: space-all;
}

.doc li {
  position: relative;
  display: flex;
  margin-bottom: 9px;
}

.doc i {
  width: 37px;
  font-family: "Open Sans", sans-serif;
  font-style: normal;
}

.doc .dot::before {
  content: "";
  display: block;
  width: 12px;
  height: 12px;
  margin-top: 10px;
  border-radius: 50%;
  background: #111;
}

.doc div {
  flex: 1;
}

.doc b {
  font-weight: 400;
  color: #333;
}

.line {
  display: block;
  white-space: nowrap;
}

.line.full {
  text-align: justify;
  text-align-last: justify;
}

.doc mark {
  padding: 4px 0;
  background: #d4d4d4;
  color: inherit;
}

.handle {
  position: absolute;
  left: -51px;
  top: 8px;
  width: 10px;
  height: 14px;
  fill: #888;
  stroke: none;
}

.corners {
  display: flex;
  justify-content: space-between;
  padding: 0 99px;
}

.corner {
  width: 33px;
  height: 32px;
  border-top: 1px solid #d4d4d4;
}

.corner.left {
  border-right: 1px solid #e4e4e4;
}

.corner.right {
  border-left: 1px solid #e4e4e4;
}

.address {
  display: flex;
  justify-content: center;
  gap: 28px;
  margin: 28px 0 46px;
  color: #858585;
  font-size: 18px;
  line-height: 32px;
}

.band {
  display: flex;
  height: 27px;
}

.band-dark {
  width: 918px;
  background: #545e5d;
  clip-path: polygon(0 0, 100% 0, calc(100% - 19px) 100%, 0 100%);
}

.band-red {
  flex: 1;
  margin-left: -14px;
  background: #ff2f1a;
  clip-path: polygon(20px 0, 100% 0, 100% 100%, 0 100%);
}

/* Status bar */
.statusbar {
  display: flex;
  justify-content: space-between;
  flex: none;
  height: 28px;
  border-top: 1px solid #d9dbe2;
  border-bottom: 3px solid #c8cbdc;
  background: #f0f1f6;
  z-index: 1;
}

.status-left,
.status-right {
  display: flex;
  align-items: center;
}

.status-left {
  padding: 0 0 2px 4px;
}

.status-left span {
  display: flex;
  align-items: center;
  gap: 8px;
  padding: 0 13px;
  border-right: 1px solid #d8dae0;
  line-height: 15px;
}

.status-left .warn {
  padding-left: 17px;
  border: none;
}

.status-right button {
  display: flex;
  align-items: center;
  justify-content: center;
  width: 26px;
  height: 24px;
  margin-right: 8px;
}

.status-right .on {
  background: #dcdce2;
  border-radius: 4px;
}

.status-right .sep {
  margin: 0 8px 0 0;
}

.zoom-value {
  width: 67px;
}

.zoom {
  width: 152px;
  height: 12px;
  margin: 0 9px 0 0;
  appearance: none;
  background: linear-gradient(#b4b6bc, #b4b6bc) center / 100% 1px no-repeat;
}

.zoom::-webkit-slider-thumb {
  appearance: none;
  width: 10px;
  height: 10px;
  border-radius: 50%;
  background: #fff;
  border: 1px solid #d0d0d0;
}

.status-right .expand {
  margin-right: 12px;
}

/* Chat window floating over the editor */
.chat {
  position: absolute;
  top: 41px;
  right: 0;
  bottom: 25px;
  display: flex;
  flex-direction: column;
  width: 271px;
  background: #fff;
  border-left: 2px solid #b4b4b6;
  border-bottom: 1px solid #888;
  font-family: "Noto Sans CJK SC", sans-serif;
  z-index: 2;
}

.chat-head {
  display: flex;
  align-items: center;
  justify-content: flex-end;
  height: 42px;
  margin-left: -2px;
  padding-right: 25px;
  background: #4e545c;
  color: #d0d3d6;
}

.chat-head button {
  display: flex;
}

.chat-log {
  display: flex;
  flex-direction: column;
  justify-content: space-between;
  flex: 1;
  padding: 3px 0 4px 20px;
  color: #3c424d;
  font-size: 17px;
  font-weight: 300;
  line-height: 28px;
  white-space: nowrap;
  overflow: hidden;
}

.chat-log p {
  display: flex;
  align-items: center;
}

.chat-log time {
  margin-left: 8px;
  color: #c4c6ca;
}

.chat-log time,
.chat-log code {
  font-family: "Liberation Mono", monospace;
  font-size: 14px;
  font-weight: 400;
}

.teacher {
  color: #2f97f0;
}

.student {
  color: #ff9a10;
}

.chat-tools {
  display: flex;
  align-items: center;
  gap: 21px;
  height: 43px;
  padding: 0 5px 0 14px;
  border-top: 1px solid #edf1f5;
  color: #4a4e55;
  font-size: 17px;
  font-weight: 300;
}

.chat-tools button {
  display: flex;
}

.chat-tools label {
  margin-left: auto;
  color: #a0a3a8;
}

.chat-tools select {
  width: 75px;
  height: 32px;
  margin-left: -14px;
  padding-left: 14px;
  appearance: none;
  background: #fbfcfe;
}

.chat-input {
  height: 149px;
  padding: 5px 20px;
  font-size: 17px;
  font-weight: 300;
  resize: none;
}

.chat-input::placeholder {
  color: #8f9296;
}

.chat-foot {
  display: flex;
  gap: 3px;
  height: 40px;
  padding: 5px 22px;
  border-top: 1px solid #e6f0f6;
  font-family: "Open Sans", "Noto Sans CJK SC", sans-serif;
  font-size: 17px;
  font-weight: 300;
  line-height: 24px;
}

.chat-foot strong {
  color: #ff9f1a;
  font-weight: 700;
}

/* Input method bar */
.ime {
  position: absolute;
  right: 98px;
  bottom: 11px;
  display: flex;
  align-items: center;
  justify-content: space-between;
  width: 224px;
  height: 32px;
  padding: 0 12px 0 5px;
  background: #fff;
  border: 1px solid #444;
  color: #667072;
  z-index: 3;
}

.ime b {
  margin-left: 4px;
  font-size: 21px;
  line-height: 28px;
}

.ime-logo {
  width: 28px;
  height: 28px;
}

.solid {
  fill: currentColor;
  stroke: none;
}

/* Watermarks and pointer */
.doc-watermark {
  position: absolute;
  left: 995px;
  top: 576px;
  color: rgba(90, 105, 120, 0.17);
  font-family: "Noto Sans CJK SC", sans-serif;
  font-size: 101px;
  font-weight: 500;
  line-height: 120px;
  white-space: nowrap;
  transform: translate(-50%, -50%) rotate(-30deg);
  z-index: 1;
}

.pink-watermark {
  position: absolute;
  left: 1200px;
  top: 115px;
  display: flex;
  gap: 6px;
  color: rgba(255, 130, 190, 0.65);
  font-size: 36px;
  line-height: 48px;
  white-space: nowrap;
  z-index: 4;
}

.text-cursor {
  position: absolute;
  left: 1318px;
  top: 681px;
  width: 10px;
  height: 18px;
  color: #222;
  z-index: 1;
}
```
